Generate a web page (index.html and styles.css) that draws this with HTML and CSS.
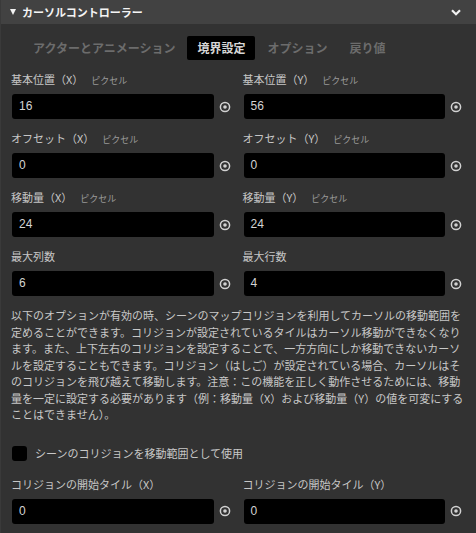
FILE: index.html
```html
<!DOCTYPE html>
<html lang="ja">
<head>
<meta charset="utf-8">
<link rel="stylesheet" href="styles.css">
</head>
<body>
<div class="panel">
  <div class="header">
    <span class="tri"></span>
    <span class="title">カーソルコントローラー</span>
    <svg class="chev" width="10" height="7" viewBox="0 0 10 7"><path d="M1 1.2 L5 5.2 L9 1.2" fill="none" stroke="#f2f2f2" stroke-width="2.2"/></svg>
  </div>
  <div class="body">
    <div class="tabs">
      <span class="tab">アクターとアニメーション</span>
      <span class="tab active">境界設定</span>
      <span class="tab">オプション</span>
      <span class="tab">戻り値</span>
    </div>
    <div class="grid">
      <div class="field">
        <div class="label">基本位置（X）<span class="unit">ピクセル</span></div>
        <div class="row"><div class="input">16</div><svg class="target" width="12" height="12" viewBox="0 0 12 12"><circle cx="6" cy="6" r="4.6" fill="none" stroke="#d2d2d2" stroke-width="1.5"/><circle cx="6" cy="6" r="1.8" fill="#d2d2d2"/></svg></div>
      </div>
      <div class="field">
        <div class="label">基本位置（Y）<span class="unit">ピクセル</span></div>
        <div class="row"><div class="input">56</div><svg class="target" width="12" height="12" viewBox="0 0 12 12"><circle cx="6" cy="6" r="4.6" fill="none" stroke="#d2d2d2" stroke-width="1.5"/><circle cx="6" cy="6" r="1.8" fill="#d2d2d2"/></svg></div>
      </div>
      <div class="field">
        <div class="label">オフセット（X）<span class="unit">ピクセル</span></div>
        <div class="row"><div class="input">0</div><svg class="target" width="12" height="12" viewBox="0 0 12 12"><circle cx="6" cy="6" r="4.6" fill="none" stroke="#d2d2d2" stroke-width="1.5"/><circle cx="6" cy="6" r="1.8" fill="#d2d2d2"/></svg></div>
      </div>
      <div class="field">
        <div class="label">オフセット（Y）<span class="unit">ピクセル</span></div>
        <div class="row"><div class="input">0</div><svg class="target" width="12" height="12" viewBox="0 0 12 12"><circle cx="6" cy="6" r="4.6" fill="none" stroke="#d2d2d2" stroke-width="1.5"/><circle cx="6" cy="6" r="1.8" fill="#d2d2d2"/></svg></div>
      </div>
      <div class="field">
        <div class="label">移動量（X）<span class="unit">ピクセル</span></div>
        <div class="row"><div class="input">24</div><svg class="target" width="12" height="12" viewBox="0 0 12 12"><circle cx="6" cy="6" r="4.6" fill="none" stroke="#d2d2d2" stroke-width="1.5"/><circle cx="6" cy="6" r="1.8" fill="#d2d2d2"/></svg></div>
      </div>
      <div class="field">
        <div class="label">移動量（Y）<span class="unit">ピクセル</span></div>
        <div class="row"><div class="input">24</div><svg class="target" width="12" height="12" viewBox="0 0 12 12"><circle cx="6" cy="6" r="4.6" fill="none" stroke="#d2d2d2" stroke-width="1.5"/><circle cx="6" cy="6" r="1.8" fill="#d2d2d2"/></svg></div>
      </div>
      <div class="field">
        <div class="label">最大列数</div>
        <div class="row"><div class="input">6</div><svg class="target" width="12" height="12" viewBox="0 0 12 12"><circle cx="6" cy="6" r="4.6" fill="none" stroke="#d2d2d2" stroke-width="1.5"/><circle cx="6" cy="6" r="1.8" fill="#d2d2d2"/></svg></div>
      </div>
      <div class="field">
        <div class="label">最大行数</div>
        <div class="row"><div class="input">4</div><svg class="target" width="12" height="12" viewBox="0 0 12 12"><circle cx="6" cy="6" r="4.6" fill="none" stroke="#d2d2d2" stroke-width="1.5"/><circle cx="6" cy="6" r="1.8" fill="#d2d2d2"/></svg></div>
      </div>
    </div>
    <p class="desc">以下のオプションが有効の時、シーンのマップコリジョンを利用してカーソルの移動範囲を定めることができます。コリジョンが設定されているタイルはカーソル移動ができなくなります。また、上下左右のコリジョンを設定することで、一方方向にしか移動できないカーソルを設定することもできます。コリジョン（はしご）が設定されている場合、カーソルはそのコリジョンを飛び越えて移動します。注意：この機能を正しく動作させるためには、移動量を一定に設定する必要があります（例：移動量（X）および移動量（Y）の値を可変にすることはできません）。</p>
    <div class="check"><span class="box"></span><span class="check-label">シーンのコリジョンを移動範囲として使用</span></div>
    <div class="grid grid-bottom">
      <div class="field">
        <div class="label">コリジョンの開始タイル（X）</div>
        <div class="row"><div class="input">0</div><svg class="target" width="12" height="12" viewBox="0 0 12 12"><circle cx="6" cy="6" r="4.6" fill="none" stroke="#d2d2d2" stroke-width="1.5"/><circle cx="6" cy="6" r="1.8" fill="#d2d2d2"/></svg></div>
      </div>
      <div class="field">
        <div class="label">コリジョンの開始タイル（Y）</div>
        <div class="row"><div class="input">0</div><svg class="target" width="12" height="12" viewBox="0 0 12 12"><circle cx="6" cy="6" r="4.6" fill="none" stroke="#d2d2d2" stroke-width="1.5"/><circle cx="6" cy="6" r="1.8" fill="#d2d2d2"/></svg></div>
      </div>
    </div>
  </div>
</div>
</body>
</html>
```
FILE: styles.css
```css
html, body {
  margin: 0;
  padding: 0;
  background: #323232;
}
body {
  font-family: "Noto Sans CJK JP", "Noto Sans", sans-serif;
  color: #c8c8c8;
  width: 476px;
  height: 533px;
  overflow: hidden;
}
.panel {
  width: 476px;
  min-height: 533px;
  background: #323232;
  border-left: 1px solid #3a3a3a;
  box-sizing: border-box;
}
.header {
  height: 24px;
  background: #424242;
  display: flex;
  align-items: center;
  padding: 0 15px 0 9px;
  box-sizing: border-box;
}
.tri {
  width: 0;
  height: 0;
  border-left: 3.5px solid transparent;
  border-right: 3.5px solid transparent;
  border-top: 6px solid #f2f2f2;
  margin-right: 6px;
}
.title {
  font-size: 11px;
  font-weight: 700;
  color: #f4f4f4;
  line-height: 24px;
  flex: 1;
}
.chev {
  display: block;
}
.body {
  padding: 12px 10px 0 10px;
}
.tabs {
  display: flex;
  gap: 2px;
  margin-left: 12px;
  height: 24px;
}
.tab {
  padding: 0 10px;
  font-size: 12px;
  font-weight: 700;
  line-height: 24px;
  color: #6c6c6c;
  border-radius: 2px;
}
.tab.active {
  background: #000;
  color: #d6d6d6;
}
.grid {
  display: grid;
  grid-template-columns: 1fr 1fr;
  column-gap: 8px;
  row-gap: 10px;
  margin-top: 10px;
}
.label {
  font-size: 11px;
  line-height: 18px;
  height: 18px;
  margin-bottom: 6px;
  color: #c6c6c6;
  white-space: nowrap;
}
.unit {
  font-size: 9px;
  color: #9a9a9a;
  margin-left: 8px;
}
.row {
  display: flex;
  align-items: center;
}
.input {
  flex: 1;
  height: 25px;
  background: #000;
  border-radius: 3px;
  font-family: "Liberation Sans", "Noto Sans CJK JP", sans-serif;
  font-size: 12px;
  line-height: 25px;
  color: #d4d4d4;
  padding-left: 7px;
  margin-left: 1px;
}
.target {
  display: block;
  margin: 0 4px 0 5px;
}
.desc {
  margin: 11px 0 0 0;
  font-size: 11px;
  line-height: 16.5px;
  color: #c8c8c8;
  width: 460px;
}
.check {
  display: flex;
  align-items: center;
  margin-top: 23px;
  height: 15px;
}
.box {
  width: 15px;
  height: 15px;
  background: #000;
  border-radius: 3px;
  margin-left: 1px;
  margin-right: 8px;
}
.check-label {
  font-size: 11px;
  color: #c8c8c8;
}
.grid-bottom {
  margin-top: 14px;
}
```
